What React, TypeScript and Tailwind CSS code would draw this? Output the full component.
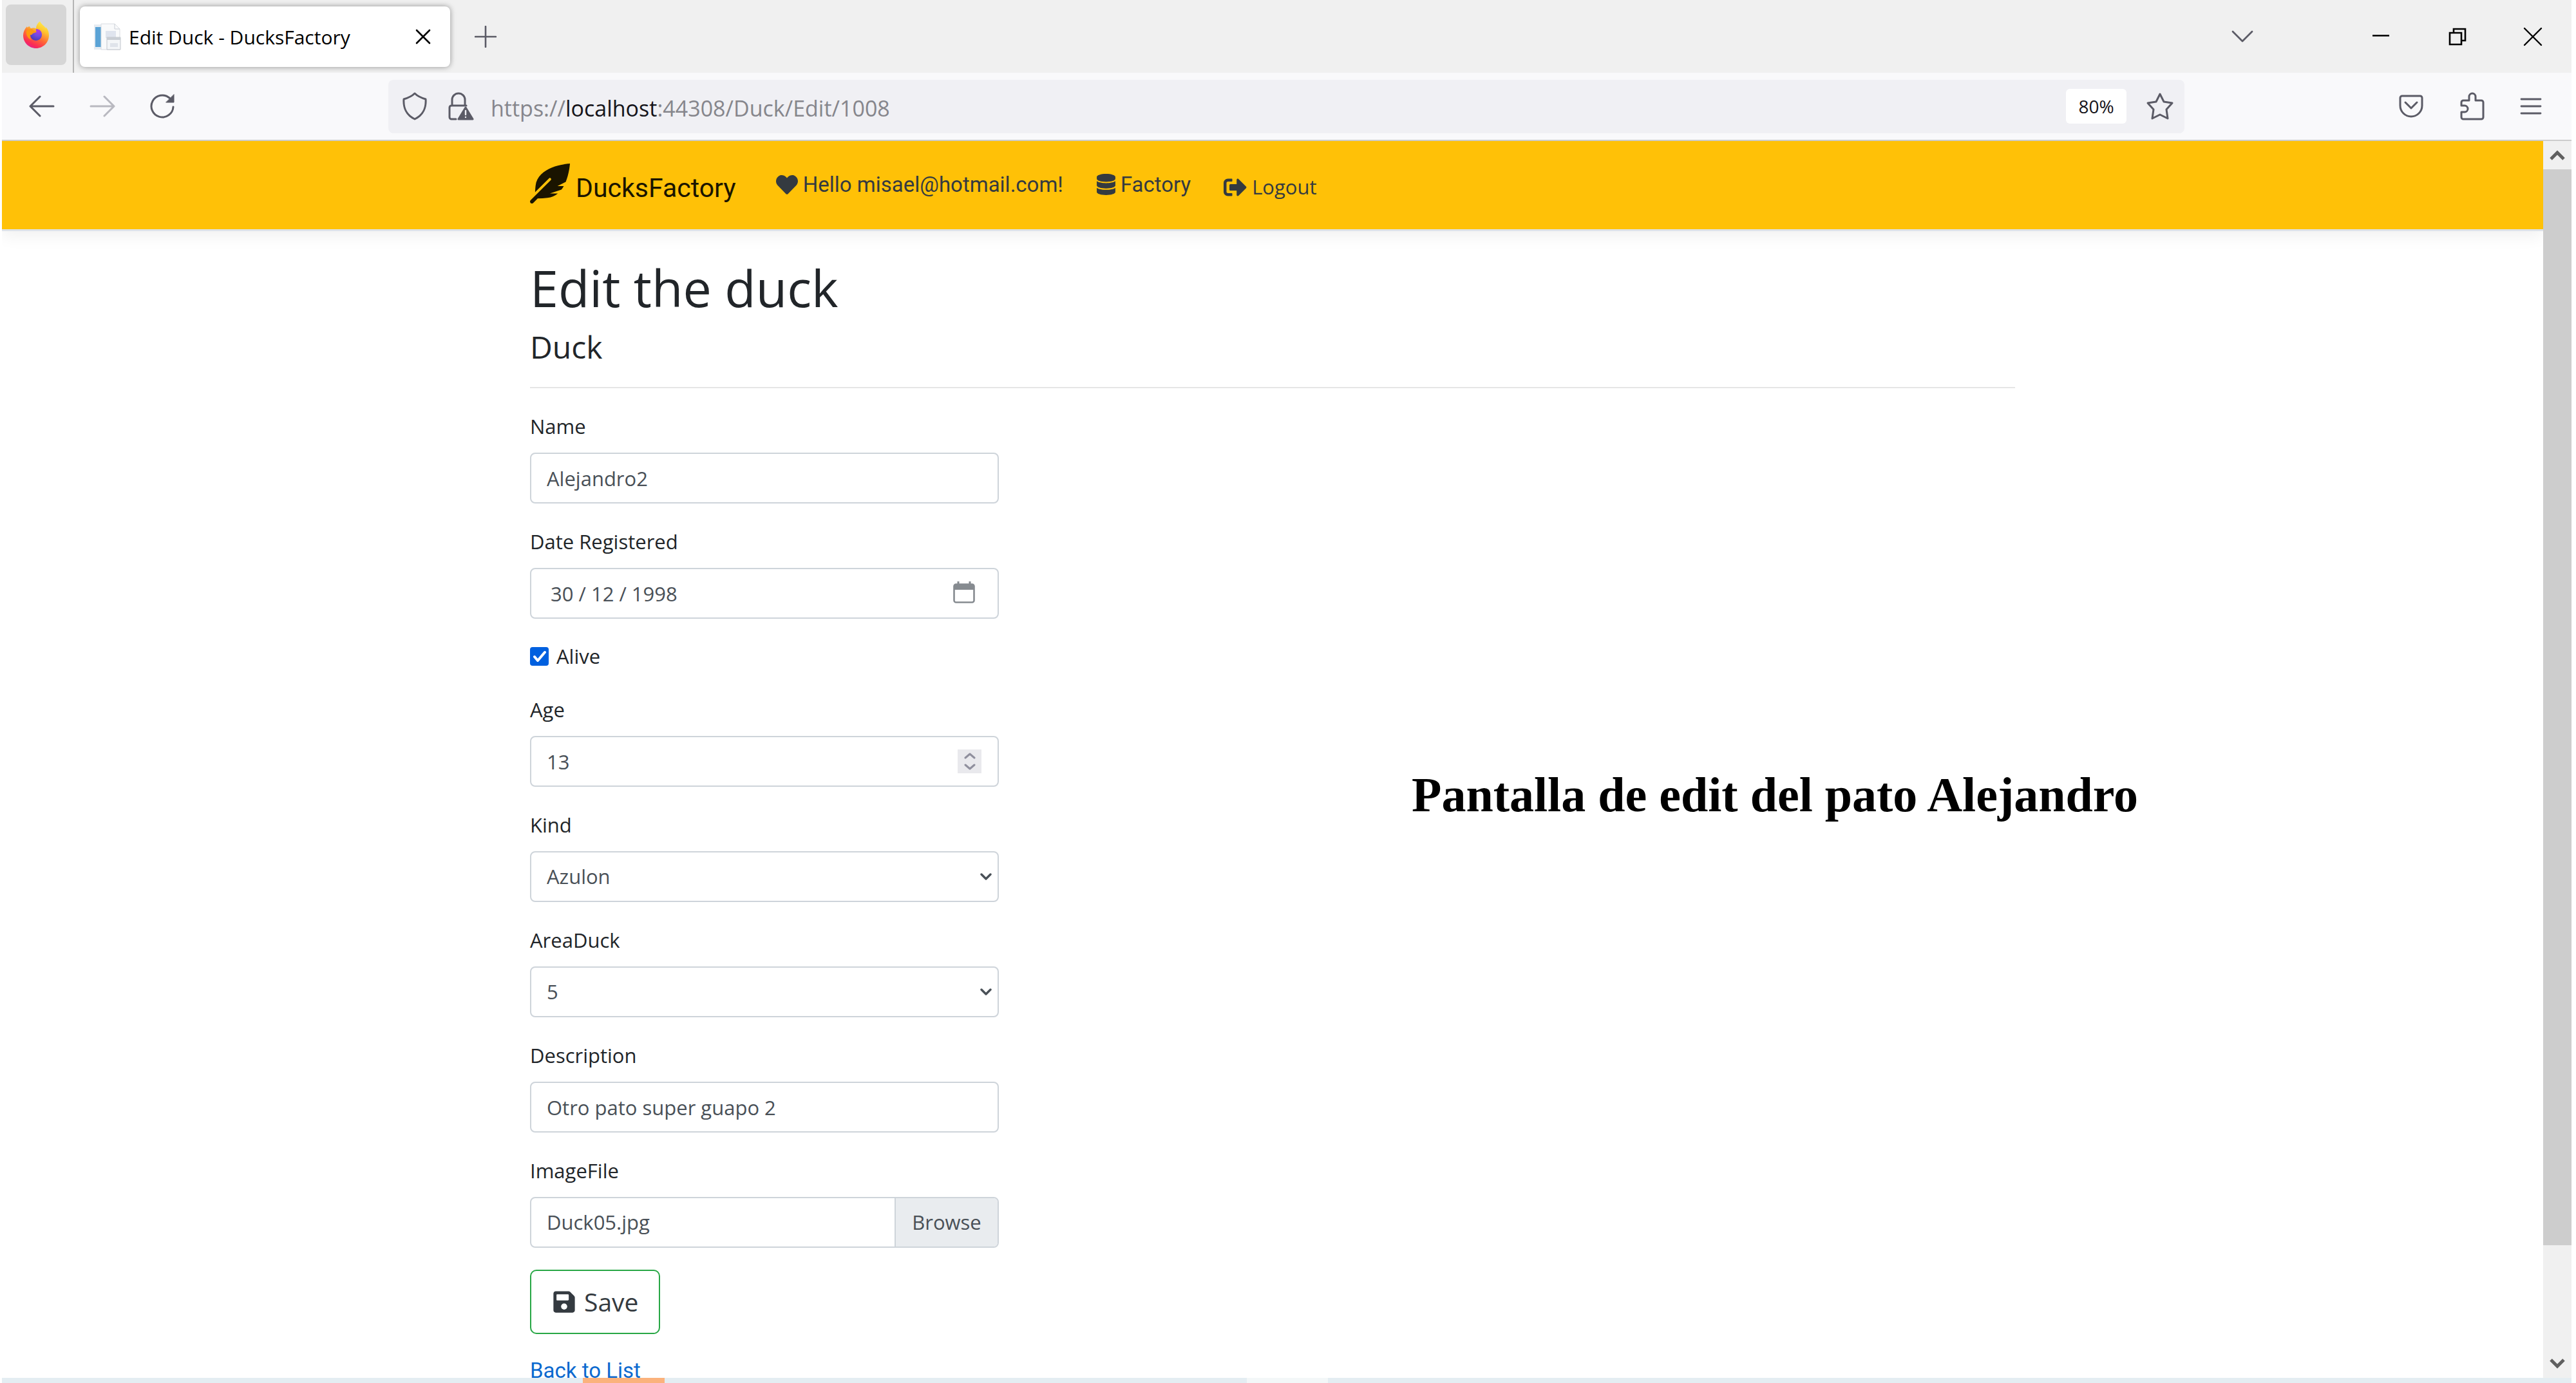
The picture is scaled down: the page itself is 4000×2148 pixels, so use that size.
import React, { useState } from "react";
import { FaDatabase, FaFeatherAlt, FaHeart, FaSave, FaSignOutAlt } from "react-icons/fa";

const iconStroke = { fill: "none", stroke: "currentColor", strokeLinecap: "round", strokeLinejoin: "round" } as const;

function FirefoxLogo() {
  return (
    <svg viewBox="0 0 42 42" className="size-[42px]" aria-hidden="true">
      <defs>
        <linearGradient id="fx-flame" x1="0.8" y1="0" x2="0.3" y2="1">
          <stop offset="0" stopColor="#fff44f" />
          <stop offset="0.3" stopColor="#ffc52e" />
          <stop offset="0.6" stopColor="#ff6a35" />
          <stop offset="0.85" stopColor="#fb2d55" />
          <stop offset="1" stopColor="#e3208a" />
        </linearGradient>
        <radialGradient id="fx-globe" cx="0.7" cy="0.15" r="0.9">
          <stop offset="0" stopColor="#b833e1" />
          <stop offset="0.5" stopColor="#6f4be0" />
          <stop offset="1" stopColor="#4a3bb5" />
        </radialGradient>
      </defs>
      <path
        d="M27 0c-4 3-6 7-6 11-3-1-5-1-8 0-1-1-2-2-2-3-2 0-3 1-3 2-1-1-1-2-1-2C3 12 1 17 1 22c0 11 9 20 20 20s20-9 20-20c0-6-2-10-5-13 0 1 0 1 0 2C34 7 29 5 27 0z"
        fill="url(#fx-flame)"
      />
      <path d="M21 12c6 0 9 4 9 9s-4 9-9 9-9-4-9-9c0-2 1-4 2-5 2 1 5 1 7 0z" fill="url(#fx-globe)" />
      <path d="M6 15c3-3 7-4 10-2 1 2 3 2 6 3-1 2-5 2-6 3s-2 3-4 2c-1 3 0 6 2 8-6-2-9-8-8-14z" fill="#ff980e" />
    </svg>
  );
}

function PageFavicon() {
  return (
    <svg viewBox="0 0 42 42" className="size-[42px]" aria-hidden="true">
      <rect x="0" y="2" width="14" height="39" fill="#e6ecf2" />
      <rect x="2" y="6" width="9" height="31" fill="#5ba3d6" />
      <path d="M13 1h19l8 8v32H11V1z" fill="#f9fafb" stroke="#d9dce1" />
      <path d="M32 1v8h8" fill="none" stroke="#c9ced6" />
      <rect x="18" y="12" width="16" height="11" fill="#dfe4ee" />
      <path d="M20 22h21v19H20z" fill="#f4f6f8" stroke="#c0c5cc" />
      <path d="M20 22h21v4H20z" fill="#c9ced4" />
      <rect x="25" y="31" width="12" height="6" fill="#dfe3ea" />
    </svg>
  );
}

function TabBar() {
  return (
    <header className="flex h-[113px] shrink-0 items-center bg-[#f0f0f0] text-black">
      <button aria-label="Firefox" className="ml-[6px] mb-[5px] flex size-[94px] items-center justify-center rounded-lg bg-[#d6d6d6]">
        <FirefoxLogo />
      </button>
      <div className="ml-[10px] h-full w-[2px] bg-[#b4b4b4]" />
      <div className="ml-[9px] flex h-[94px] w-[575px] items-center rounded-lg bg-white pl-[22px] pr-[28px] shadow-[0_0_8px_rgba(0,0,0,0.4)]">
        <PageFavicon />
        <span className="ml-[12px] flex-1 whitespace-nowrap pt-[2px] text-[30px]">Edit Duck - DucksFactory</span>
        <button aria-label="Close tab">
          <svg viewBox="0 0 28 28" className="size-[28px]" {...iconStroke} strokeWidth="2.6"><path d="M4 4l20 20M24 4L4 24" /></svg>
        </button>
      </div>
      <button aria-label="New tab" className="ml-[38px] text-[#5b5b66]">
        <svg viewBox="0 0 34 34" className="size-[34px]" {...iconStroke} strokeWidth="2.6"><path d="M17 1v32M1 17h32" /></svg>
      </button>
      <div className="ml-auto flex items-center pr-[45px]">
        <button aria-label="List all tabs" className="mr-[185px] text-[#5b5b66]">
          <svg viewBox="0 0 34 20" className="h-[20px] w-[34px]" {...iconStroke} strokeWidth="2.8"><path d="M2 2l15 15L32 2" /></svg>
        </button>
        <button aria-label="Minimize" className="mr-[92px]">
          <svg viewBox="0 0 26 26" className="size-[26px]" fill="currentColor"><path d="M0 10h26v2.6H0z" /></svg>
        </button>
        <button aria-label="Restore" className="mr-[88px]">
          <svg viewBox="0 0 28 28" className="size-[28px]" fill="none" stroke="currentColor" strokeWidth="2.6"><path d="M2 8h18v18H2zM8 8V2h18v18h-6" /></svg>
        </button>
        <button aria-label="Close window">
          <svg viewBox="0 0 30 30" className="size-[30px]" {...iconStroke} strokeWidth="2.4"><path d="M2 2l26 26M28 2L2 28" /></svg>
        </button>
      </div>
    </header>
  );
}

function Toolbar() {
  return (
    <nav aria-label="Browser" className="flex h-[106px] shrink-0 items-center border-b-2 border-[#cccccc] bg-[#f9f9fb] text-[#5b5b66]">
      <button aria-label="Back" className="ml-[42px]">
        <svg viewBox="0 0 40 34" className="h-[34px] w-[40px]" {...iconStroke} strokeWidth="3"><path d="M38 17H2M17 2L2 17l15 15" /></svg>
      </button>
      <button aria-label="Forward" disabled className="ml-[54px] text-[#b9b9c0]">
        <svg viewBox="0 0 40 34" className="h-[34px] w-[40px]" {...iconStroke} strokeWidth="3"><path d="M2 17h36M23 2l15 15-15 15" /></svg>
      </button>
      <button aria-label="Reload" className="ml-[53px]">
        <svg viewBox="0 0 40 40" className="size-[40px]" {...iconStroke} strokeWidth="3">
          <path d="M37 21a17 17 0 1 1-6-14l3 3" />
          <path d="M38 2v12H26z" fill="currentColor" strokeWidth="1" />
        </svg>
      </button>
      <div className="ml-[331px] mr-[333px] flex h-[83px] min-w-0 flex-1 items-center rounded-lg bg-[#f0f0f4] pl-[20px] pr-[16px]">
        <svg viewBox="0 0 42 44" className="h-[44px] w-[42px]" {...iconStroke} strokeWidth="3">
          <path d="M21 2c4 4 10 7 17 9 1 13-4 25-17 31C8 36 3 24 4 11c7-2 13-5 17-9z" />
        </svg>
        <svg viewBox="0 0 42 44" className="ml-[29px] h-[44px] w-[42px]" {...iconStroke} strokeWidth="3">
          <path d="M8 21v-9a10 10 0 0 1 20 0v9M14 42H7a3 3 0 0 1-3-3V24a3 3 0 0 1 3-3h23" />
          <path d="M29 24l11 18H18z" fill="currentColor" />
          <path d="M29 29v6M29 39v0" stroke="#f0f0f4" strokeWidth="2.4" />
        </svg>
        <span className="ml-[26px] flex-1 whitespace-nowrap pt-[6px] text-[34px] text-[#86868c]">
          https://<span className="text-[#15141a]">localhost</span>:44308/Duck/Edit/1008
        </span>
        <button className="h-[54px] w-[94px] rounded-md bg-white text-[28px] text-[#15141a]">80%</button>
        <button aria-label="Bookmark this page" className="ml-[30px]">
          <svg viewBox="0 0 44 44" className="size-[44px]" {...iconStroke} strokeWidth="3">
            <path d="M22 3l6 12 13 2-9 10 2 14-12-6-12 6 2-14-9-10 13-2z" />
          </svg>
        </button>
      </div>
      <button aria-label="Save to Pocket">
        <svg viewBox="0 0 38 36" className="h-[36px] w-[38px]" {...iconStroke} strokeWidth="3">
          <path d="M5 2h28a3 3 0 0 1 3 3v12a17 17 0 0 1-34 0V5a3 3 0 0 1 3-3zM10 12l9 9 9-9" />
        </svg>
      </button>
      <button aria-label="Extensions" className="ml-[57px]">
        <svg viewBox="0 0 38 44" className="h-[44px] w-[38px]" {...iconStroke} strokeWidth="3">
          <path d="M14 13V7a5 5 0 0 1 10 0v6h9a3 3 0 0 1 3 3v23a3 3 0 0 1-3 3H5a3 3 0 0 1-3-3v-8h5a5 5 0 0 0 0-10H2v-5a3 3 0 0 1 3-3z" />
        </svg>
      </button>
      <button aria-label="Menu" className="ml-[55px] mr-[46px]">
        <svg viewBox="0 0 34 28" className="h-[28px] w-[34px]" {...iconStroke} strokeWidth="2.8"><path d="M2 3h30M2 14h30M2 25h30" /></svg>
      </button>
    </nav>
  );
}

function SiteNav() {
  return (
    <nav aria-label="Site" className="relative h-[140px] shrink-0 border-b-[3px] border-[#dee2e6] bg-[#ffc107] font-['Roboto',sans-serif] text-[#343a40] shadow-[0_8px_24px_rgba(0,0,0,0.06)]">
      <div className="mx-auto flex h-full max-w-[2306px] items-center">
        <a href="#home" className="flex items-end text-[#1a1400]">
          <FaFeatherAlt className="mb-[6px] size-[62px]" />
          <span className="ml-[9px] text-[41px] leading-[60px]">DucksFactory</span>
        </a>
        <a href="#account" className="ml-[62px] flex items-center gap-[8px] pb-[2px] text-[33px]">
          <FaHeart className="size-[34px]" />
          Hello misael@hotmail.com!
        </a>
        <a href="#factory" className="ml-[50px] flex items-center gap-[6px] pb-[2px] text-[33px]">
          <FaDatabase className="size-[33px]" />
          Factory
        </a>
        <button className="ml-[51px] mt-[6px] flex items-center gap-[8px] font-['Open_Sans',sans-serif] text-[31px]">
          <FaSignOutAlt className="size-[36px]" />
          Logout
        </button>
      </div>
    </nav>
  );
}

const control = "h-[79px] w-full rounded-lg border-2 border-[#ced4da] bg-white px-[24px] text-[31px] text-[#495057]";

function Field({ id, label, children }: { id: string; label: string; children: React.ReactNode }) {
  return (
    <div className="mb-[34px]">
      <label htmlFor={id} className="mb-[16px] block text-[31px] leading-[50px]">{label}</label>
      <div className="relative">{children}</div>
    </div>
  );
}

function SelectField({ id, label, options }: { id: string; label: string; options: string[] }) {
  return (
    <Field id={id} label={label}>
      <select id={id} className={control + " appearance-none"}>
        {options.map((o) => <option key={o}>{o}</option>)}
      </select>
      <svg viewBox="0 0 18 12" className="pointer-events-none absolute right-[11px] top-[34px] h-[12px] w-[18px] text-[#495057]" {...iconStroke} strokeWidth="3.4">
        <path d="M2 2l7 7 7-7" />
      </svg>
    </Field>
  );
}

function EditForm() {
  const [age, setAge] = useState(13);
  return (
    <form className="w-[728px] shrink-0" onSubmit={(e) => e.preventDefault()}>
      <Field id="name" label="Name">
        <input id="name" defaultValue="Alejandro2" className={control} />
      </Field>
      <Field id="date" label="Date Registered">
        <input id="date" defaultValue="30 / 12 / 1998" className={control + " pl-[30px]"} />
        <button type="button" aria-label="Open calendar" className="absolute right-[36px] top-[20px] text-[#868b90]">
          <svg viewBox="0 0 36 36" className="size-[36px]">
            <path d="M9 1v6M27 1v6" stroke="currentColor" strokeWidth="3" />
            <rect x="2.500" y="5.500" width="31" height="28" rx="3" fill="none" stroke="currentColor" strokeWidth="2.600" />
            <path d="M2 6h32v8H2z" fill="currentColor" />
          </svg>
        </button>
      </Field>
      <div className="mb-[34px] flex h-[48px] items-center">
        <input id="alive" type="checkbox" defaultChecked className="peer size-[29px] appearance-none rounded bg-[#0060df]" />
        <svg viewBox="0 0 29 29" className="pointer-events-none -ml-[29px] size-[29px]" fill="none" stroke="#fff" strokeWidth="4" strokeLinecap="round" strokeLinejoin="round">
          <path d="M7 15l5 6L23 8" />
        </svg>
        <label htmlFor="alive" className="ml-[12px] text-[31px] leading-[48px]">Alive</label>
      </div>
      <Field id="age" label="Age">
        <input id="age" inputMode="numeric" value={age} onChange={(e) => setAge(Number(e.target.value) || 0)} className={control} />
        <div className="absolute right-[27px] top-[21px] flex h-[37px] w-[37px] flex-col items-center justify-center gap-[7px] bg-[#e9e9ed] text-[#8f8f9d]">
          <button type="button" aria-label="Increase age" onClick={() => setAge(age + 1)}>
            <svg viewBox="0 0 18 10" className="block h-[10px] w-[18px]" {...iconStroke} strokeWidth="3"><path d="M2 8l7-6 7 6" /></svg>
          </button>
          <button type="button" aria-label="Decrease age" onClick={() => setAge(age - 1)}>
            <svg viewBox="0 0 18 10" className="block h-[10px] w-[18px]" {...iconStroke} strokeWidth="3"><path d="M2 2l7 6 7-6" /></svg>
          </button>
        </div>
      </Field>
      <SelectField id="kind" label="Kind" options={["Azulon"]} />
      <SelectField id="area" label="AreaDuck" options={["5"]} />
      <Field id="description" label="Description">
        <input id="description" defaultValue="Otro pato super guapo 2" className={control} />
      </Field>
      <Field id="image" label="ImageFile">
        <input id="image" type="file" className="peer sr-only" />
        <label htmlFor="image" className="flex h-[79px] items-center overflow-hidden rounded-lg border-2 border-[#ced4da] text-[31px] text-[#495057]">
          <span className="flex-1 pl-[24px]">Duck05.jpg</span>
          <span className="flex h-full w-[160px] items-center justify-center border-l-2 border-[#ced4da] bg-[#e9ecef]">Browse</span>
        </label>
      </Field>
      <button type="submit" className="flex h-[100px] items-center gap-[12px] rounded-[10px] border-2 border-[#28a745] px-[32px] text-[39px] text-[#343a40]">
        <FaSave className="size-[38px]" />
        Save
      </button>
      <a href="#list" className="mt-[32px] inline-block font-['Roboto',sans-serif] text-[33px] leading-[50px] text-[#0b69cf]">Back to List</a>
    </form>
  );
}

function ScrollBar() {
  return (
    <div className="flex w-[44px] shrink-0 flex-col items-center bg-[#f0f0f0] text-[#606060]">
      <button aria-label="Scroll up" className="flex h-[44px] items-center">
        <svg viewBox="0 0 24 18" className="h-[18px] w-[24px]" fill="none" stroke="currentColor" strokeWidth="5"><path d="M2 15L12 5l10 10" /></svg>
      </button>
      <div className="h-[87%] w-full bg-[#cdcdcd]" />
      <button aria-label="Scroll down" className="mt-auto flex h-[44px] items-center">
        <svg viewBox="0 0 24 18" className="h-[18px] w-[24px]" fill="none" stroke="currentColor" strokeWidth="5"><path d="M2 3l10 10L22 3" /></svg>
      </button>
    </div>
  );
}

export default function App() {
  return (
    <div className="flex h-screen flex-col overflow-hidden border-l-[3px] border-r-[7px] border-white bg-white font-['Open_Sans','Noto_Sans',sans-serif] text-[#212529]">
      <TabBar />
      <Toolbar />
      <div className="flex min-h-0 flex-1">
        <div className="flex min-w-0 flex-1 flex-col overflow-hidden">
          <SiteNav />
          <main className="mx-auto w-full max-w-[2306px] pt-[38px]">
            <h1 className="text-[79px] leading-[100px]">Edit the duck</h1>
            <h2 className="mt-[12px] text-[48px] leading-[60px]">Duck</h2>
            <hr className="mb-[34px] mt-[32px] border-t-2 border-[#e5e5e5]" />
            <div className="flex">
              <EditForm />
              <p className="ml-[641px] mt-[542px] whitespace-nowrap font-['Liberation_Serif',serif] text-[76px] font-bold leading-[110px] text-black">
                Pantalla de edit del pato Alejandro
              </p>
            </div>
          </main>
        </div>
        <ScrollBar />
      </div>
      <footer className="flex h-[8px] shrink-0 bg-[#e4edf2]">
        <div className="ml-[902px] w-[127px] bg-[#fbb27c]" />
        <div className="ml-[904px] w-[126px] bg-[#f3f7f8]" />
      </footer>
    </div>
  );
}
